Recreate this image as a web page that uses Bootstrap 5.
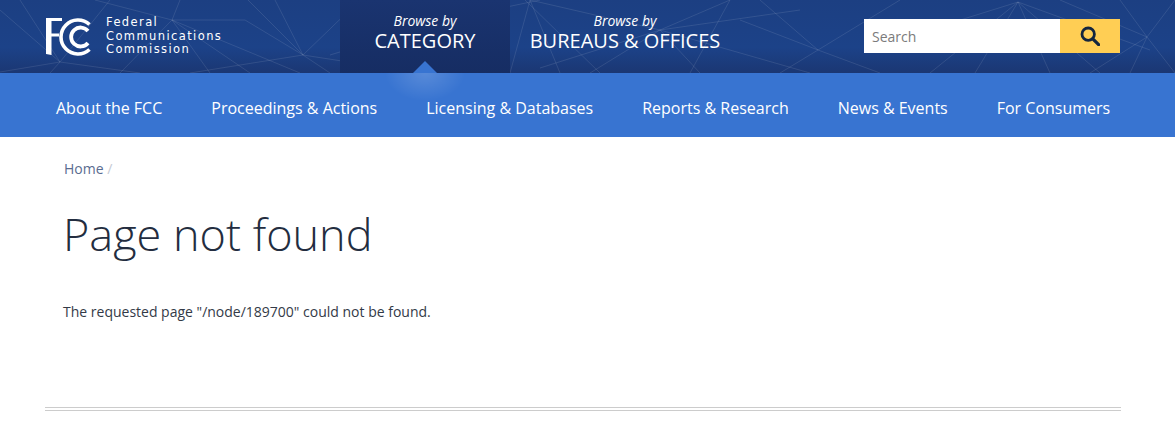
<!DOCTYPE html>
<html lang="en">
<head>
    <meta charset="UTF-8">
    <meta name="viewport" content="width=device-width, initial-scale=1.0">
    <title>Page not found | Federal Communications Commission</title>
    <link href="https://cdn.jsdelivr.net/npm/bootstrap@5.3.3/dist/css/bootstrap.min.css" rel="stylesheet">
    <style>
        body {
            font-family: "Open Sans", "Liberation Sans", sans-serif;
            font-size: 14px;
            color: #333a47;
            background: #fff;
        }
        .site-top {
            height: 73px;
            background: linear-gradient(#1c3f82 0%, #1c4288 65%, #1b3773 100%);
            overflow: hidden;
        }
        .top-lines {
            position: absolute;
            inset: 0;
            width: 100%;
            height: 100%;
        }
        .top-lines path {
            stroke: #fff;
            stroke-opacity: .1;
            fill: none;
        }
        .logo-wrap {
            width: 340px;
            flex: none;
            padding-left: 45px;
        }
        .logo-text {
            font-family: "DejaVu Sans", sans-serif;
            font-size: 11.5px;
            line-height: 13.5px;
            letter-spacing: 1.4px;
            color: #fff;
            margin-left: 15px;
        }
        .browse-tab {
            color: #fff;
            text-align: center;
            text-decoration: none;
            line-height: 1;
            padding-top: 13px;
            flex: none;
        }
        .browse-tab:hover { color: #fff; }
        .browse-tab.is-active {
            width: 170px;
            background: linear-gradient(#1a3470, #162d63);
        }
        .browse-tab.plain { width: 230px; }
        .browse-tab em {
            display: block;
            font-size: 14px;
            line-height: 16px;
        }
        .browse-tab span {
            display: block;
            font-size: 20px;
            line-height: 24px;
        }
        .tab-arrow {
            position: absolute;
            left: 73px;
            bottom: 0;
            width: 24px;
            height: 12px;
            background: #3874d1;
            clip-path: polygon(50% 0, 100% 100%, 0 100%);
        }
        .search-box {
            width: 256px;
            height: 34px;
            margin-left: 124px;
            margin-top: 19px;
            flex: none;
        }
        .search-box .form-control {
            border: 0;
            border-radius: 0;
            font-size: 14px;
            padding: 0 8px;
            height: 34px;
            color: #333;
        }
        .search-box .form-control::placeholder { color: #7b7b7b; }
        .search-btn {
            width: 60px;
            height: 34px;
            flex: none;
            border: 0;
            background: #ffce54;
            padding: 0;
        }
        .main-menu {
            height: 64px;
            background: #3874d1;
            padding: 6px 0 0 56px;
            column-gap: 49px;
            overflow: hidden;
        }
        .main-menu a {
            color: #fff;
            font-size: 16px;
            text-decoration: none;
        }
        .menu-glow {
            position: absolute;
            left: 385px;
            top: -28px;
            width: 80px;
            height: 56px;
            background: radial-gradient(closest-side, rgba(255,255,255,.16), rgba(255,255,255,0));
        }
        .page-body { padding: 0 63px; }
        .crumbs {
            padding: 22px 0 0 1px;
            line-height: 20px;
            color: #c5cad3;
        }
        .crumbs a {
            color: #5a6c90;
            text-decoration: none;
        }
        .page-title {
            font-size: 45px;
            font-weight: 300;
            line-height: 58px;
            color: #232d40;
            margin: 26px 0 39px;
        }
        .not-found-msg {
            line-height: 20px;
            margin: 0;
        }
        .foot-rule {
            margin: 85px 54px 0 45px;
            height: 4px;
            border-top: 1px solid #ccc;
            border-bottom: 1px solid #ccc;
        }
    </style>
</head>
<body>
    <header class="site-top position-relative d-flex">
        <svg class="top-lines" viewBox="0 0 1175 73" preserveAspectRatio="none">
            <path d="M0 10L60 62L0 72M60 62L20 0M60 62L110 0M60 62L140 73M60 62L50 73"/>
            <path d="M172 20L210 73M172 20L95 0M172 20L250 73M172 20L300 73M172 20L180 0M172 20L120 73"/>
            <path d="M303 55L190 73M303 55L275 0M303 55L330 73M303 55L245 20L172 20M303 55L248 0M303 55L360 0M303 55L420 73"/>
            <path d="M445 20L360 0M445 20L500 73M445 20L390 73M445 20L540 0M445 20L330 55"/>
            <path d="M660 30L590 73M660 30L530 0M660 30L700 73M660 30L730 0M660 30L540 68M660 30L810 73M660 30L800 10"/>
            <path d="M530 0L560 73M530 0L510 73M525 0L600 73M730 0L690 73"/>
            <path d="M818 50L760 0M818 50L780 73M818 50L900 0M818 50L880 73M818 50L740 20"/>
            <path d="M1018 2L975 73M1018 2L930 73M1018 2L1050 73M1018 2L1100 73M1018 2L880 45M1018 2L1150 50"/>
            <path d="M1147 37L1120 0M1147 37L1175 0M1147 37L1130 73M1147 37L1175 73M1147 37L1060 0M1147 37L1090 73"/>
        </svg>
        <a class="logo-wrap d-flex align-items-center position-relative text-decoration-none" href="#">
            <svg width="46" height="38" viewBox="0 0 46 38" aria-label="FCC logo">
                <path fill="#fff" d="M1 0H17V3H6.5V15.5H14V18.5H6.5V37L1 36Z"/>
                <g fill="none" stroke="#fff">
                    <path stroke-width="3.6" d="M44.5 6.5A17 17 0 1 0 44.5 31.5"/>
                    <path stroke-width="3.8" d="M43 13A9.5 9.5 0 1 0 43 25"/>
                </g>
            </svg>
            <div class="logo-text">Federal<br>Communications<br>Commission</div>
        </a>
        <a class="browse-tab is-active position-relative" href="#">
            <em>Browse by</em>
            <span>CATEGORY</span>
            <i class="tab-arrow"></i>
        </a>
        <a class="browse-tab plain position-relative" href="#">
            <em>Browse by</em>
            <span>BUREAUS &amp; OFFICES</span>
        </a>
        <form class="search-box d-flex position-relative">
            <input class="form-control" type="text" placeholder="Search" aria-label="Search">
            <button class="search-btn d-flex align-items-center justify-content-center" type="button" aria-label="Search">
                <svg width="20" height="20" viewBox="0 0 20 20">
                    <circle cx="8.2" cy="8.2" r="6.2" fill="none" stroke="#14263f" stroke-width="2.8"/>
                    <path d="M12.8 12.8L18.6 18.6" stroke="#14263f" stroke-width="3.2" stroke-linecap="round"/>
                </svg>
            </button>
        </form>
    </header>

    <nav class="main-menu position-relative d-flex align-items-center">
        <i class="menu-glow"></i>
        <a href="#">About the FCC</a>
        <a href="#">Proceedings &amp; Actions</a>
        <a href="#">Licensing &amp; Databases</a>
        <a href="#">Reports &amp; Research</a>
        <a href="#">News &amp; Events</a>
        <a href="#">For Consumers</a>
    </nav>

    <main class="page-body">
        <div class="crumbs"><a href="#">Home</a> /</div>
        <h1 class="page-title">Page not found</h1>
        <p class="not-found-msg">The requested page "/node/189700" could not be found.</p>
    </main>
    <div class="foot-rule"></div>

    <script src="https://cdn.jsdelivr.net/npm/bootstrap@5.3.3/dist/js/bootstrap.bundle.min.js"></script>
</body>
</html>
